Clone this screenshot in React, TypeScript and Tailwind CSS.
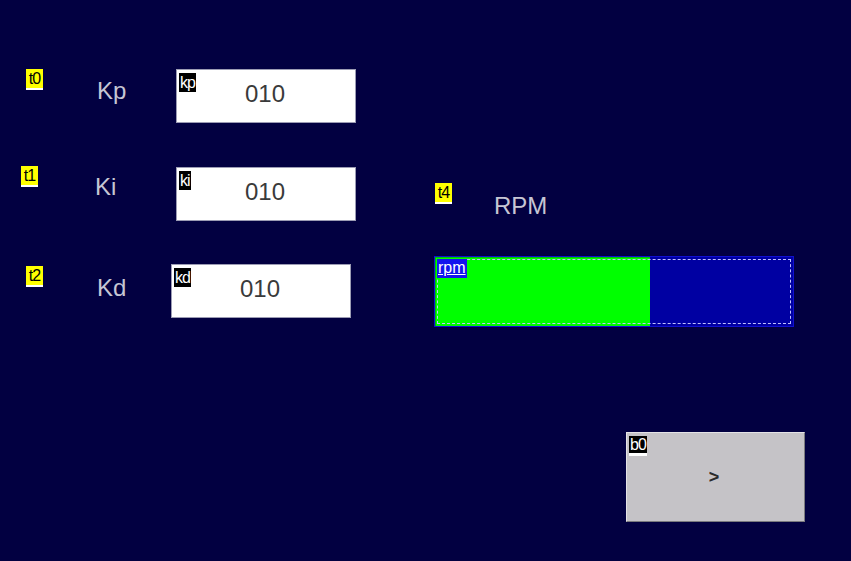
const font = { fontFamily: '"Liberation Sans", Arial, sans-serif' };

function Tag({ name, className = '' }: { name: string; className?: string }) {
  // yellow object-name tag used by the editor for text components
  return (
    <div className={`flex flex-col w-[17px] shrink-0 ${className}`}>
      <div className="bg-[#ffff00] text-black text-[16px] leading-[19px] tracking-[-1px] text-center">{name}</div>
      <div className="h-[2px] bg-white" />
    </div>
  );
}

function GainRow({
  tag,
  label,
  name,
  value,
  tagShift = '',
  labelShift = 'mt-[10px]',
  boxShift = '',
}: {
  tag: string;
  label: string;
  name: string;
  value: string;
  tagShift?: string;
  labelShift?: string;
  boxShift?: string;
}) {
  return (
    <div className="flex items-start pl-[26px]">
      <div className="w-[71px] shrink-0">
        <Tag name={tag} className={tagShift} />
      </div>
      <div className="w-[79px] shrink-0">
        <div className={`relative text-[24px] leading-none text-[#c6c6d4] ${labelShift}`}>{label}</div>
      </div>
      <div className={`relative w-[180px] h-[54px] bg-white border border-[#9c9cb4] flex items-center justify-center ${boxShift}`}>
        <div className="absolute left-[2px] top-[3px] bg-black text-white text-[16px] leading-[19px] px-[1px] tracking-[-1px]">
          {name}
        </div>
        <span className="text-[24px] leading-none text-[#3a3a3a] mt-[-4px] ml-[-2px]">{value}</span>
      </div>
    </div>
  );
}

export default function App() {
  const progress = 60;

  return (
    <div className="w-[851px] h-[561px] bg-[#020041] overflow-hidden flex" style={font}>
      {/* PID gains */}
      <div className="w-[434px] shrink-0 pt-[69px] flex flex-col gap-[44px]">
        <GainRow tag="t0" label="Kp" name="kp" value="010" />
        <GainRow tag="t1" label="Ki" name="ki" value="010" tagShift="-ml-[5px] -mt-[1px]" labelShift="-left-[2px] mt-[8px]" />
        <GainRow tag="t2" label="Kd" name="kd" value="010" tagShift="mt-[1px]" labelShift="mt-[11px]" boxShift="-ml-[5px] -mt-[1px]" />
      </div>

      {/* RPM gauge + next button */}
      <div className="flex flex-col pt-[183px]">
        <div className="h-[73px] flex items-start pl-[1px]">
          <Tag name="t4" />
          <span className="ml-[42px] mt-[11px] text-[24px] leading-none text-[#c6c6d4]">RPM</span>
        </div>

        <div className="relative w-[360px] h-[71px] border border-[#1010d0] bg-[#0000a2] flex">
          <div className="h-full bg-[#00ff00] border-l border-t border-[#00c000]" style={{ width: `${progress}%` }} />
          <div className="absolute inset-[2px] border border-dashed border-[#c0c0ff]" />
          <div className="absolute left-[2px] top-[2px] h-[19px] bg-[#1414ee] text-white text-[16px] leading-[17px] px-[1px]">
            <span className="underline decoration-1 underline-offset-[1px]">rpm</span>
          </div>
        </div>

        <div className="relative mt-[105px] ml-[192px] w-[179px] h-[90px] bg-[#c5c3c7] border border-t-[#e4e2e6] border-l-[#e4e2e6] border-r-[#7a7a7e] border-b-[#7a7a7e] flex items-center justify-center">
          <div className="absolute left-[2px] top-[3px] flex flex-col">
            <div className="bg-black text-white text-[16px] leading-[17px] px-[1px] tracking-[-1px]">b0</div>
            <div className="h-[3px] bg-white" />
          </div>
          <span className="text-[18px] font-bold text-[#2a2a2a] leading-none mt-[-1px] ml-[-3px]">&gt;</span>
        </div>
      </div>
    </div>
  );
}
